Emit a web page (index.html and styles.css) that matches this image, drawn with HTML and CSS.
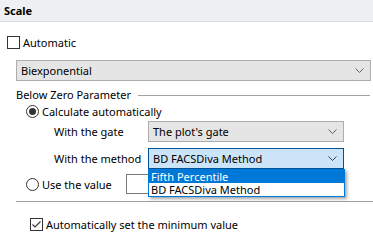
FILE: index.html
```html
<!DOCTYPE html>
<html lang="en">
<head>
    <meta charset="UTF-8">
    <title>Scale</title>
    <link rel="stylesheet" href="styles.css">
</head>
<body>
    <div class="header">Scale</div>
    <div class="content">
        <div class="check-row auto">
            <span class="checkbox"></span>
            <span>Automatic</span>
        </div>
        <div class="select scale-type">
            <span>Biexponential</span>
            <svg class="chevron" width="9" height="5" viewBox="0 0 9 5"><path d="M0.5 0.5 L4.5 4.5 L8.5 0.5" fill="none" stroke="#606060" stroke-width="1"/></svg>
        </div>
        <div class="group-title">
            <span>Below Zero Parameter</span>
            <span class="rule"></span>
        </div>
        <div class="radio-row">
            <span class="radio checked"></span>
            <span>Calculate automatically</span>
        </div>
        <div class="field-row gate">
            <span class="field-label">With the gate</span>
            <div class="select field-select">
                <span>The plot's gate</span>
                <svg class="chevron" width="9" height="5" viewBox="0 0 9 5"><path d="M0.5 0.5 L4.5 4.5 L8.5 0.5" fill="none" stroke="#606060" stroke-width="1"/></svg>
            </div>
        </div>
        <div class="field-row method">
            <span class="field-label">With the method</span>
            <div class="select field-select focused">
                <span>BD FACSDiva Method</span>
                <svg class="chevron" width="9" height="5" viewBox="0 0 9 5"><path d="M0.5 0.5 L4.5 4.5 L8.5 0.5" fill="none" stroke="#404040" stroke-width="1"/></svg>
                <ul class="dropdown">
                    <li class="selected">Fifth Percentile</li>
                    <li>BD FACSDiva Method</li>
                </ul>
            </div>
        </div>
        <div class="radio-row value-row">
            <span class="radio"></span>
            <span class="value-label">Use the value</span>
            <span class="value-input"></span>
        </div>
        <div class="separator"></div>
        <div class="check-row minimum">
            <span class="checkbox checked">
                <svg width="11" height="11" viewBox="0 0 11 11"><path d="M1.5 5.5 L4 8 L9.5 2.5" fill="none" stroke="#333" stroke-width="1.1"/></svg>
            </span>
            <span>Automatically set the minimum value</span>
        </div>
    </div>
</body>
</html>
```

FILE: styles.css
```css
body {
    margin: 0;
    padding: 0;
    font-family: 'Noto Sans', sans-serif;
    font-size: 11px;
    color: #000;
    background-color: #fff;
    width: 373px;
    height: 240px;
    overflow: hidden;
}

.header {
    height: 21px;
    line-height: 21px;
    padding-left: 4px;
    font-weight: bold;
    background-color: #eff0f4;
    border-bottom: 1px solid #dcdde3;
}

.content {
    padding-left: 7px;
}

.check-row,
.radio-row {
    display: flex;
    align-items: center;
    height: 13px;
    line-height: 13px;
    white-space: nowrap;
}

.checkbox {
    flex-shrink: 0;
    width: 11px;
    height: 11px;
    border: 1px solid #333;
    margin-right: 3px;
    display: flex;
    align-items: center;
    justify-content: center;
}

.auto {
    margin-top: 14px;
}

.select {
    position: relative;
    display: flex;
    align-items: center;
    justify-content: space-between;
    box-sizing: border-box;
    height: 21px;
    padding: 0 6px 0 4px;
    background-color: #e5e5e5;
    border: 1px solid #adadad;
    white-space: nowrap;
}

.scale-type {
    margin: 11px 2px 0 9px;
}

.group-title {
    display: flex;
    align-items: center;
    margin: 7px 3px 0 9px;
    height: 14px;
    line-height: 14px;
}

.rule {
    flex: 1;
    border-top: 1px solid #a0a0a0;
    margin-left: 7px;
}

.radio {
    flex-shrink: 0;
    box-sizing: border-box;
    width: 13px;
    height: 13px;
    border: 1px solid #333;
    border-radius: 50%;
    margin-right: 3px;
    display: flex;
    align-items: center;
    justify-content: center;
}

.radio.checked::after {
    content: "";
    width: 7px;
    height: 7px;
    border-radius: 50%;
    background-color: #333;
}

.radio-row {
    margin-left: 19px;
    margin-top: 3px;
}

.field-row {
    display: flex;
    align-items: center;
    margin-left: 47px;
    white-space: nowrap;
}

.gate {
    margin-top: 3px;
}

.method {
    margin-top: 6px;
}

.field-label {
    flex-shrink: 0;
    width: 94px;
}

.field-select {
    flex-shrink: 0;
    width: 196px;
}

.select.focused {
    background-color: #cce4f7;
    border-color: #005499;
}

.dropdown {
    position: absolute;
    top: 20px;
    left: -1px;
    width: 197px;
    box-sizing: border-box;
    margin: 0;
    padding: 0;
    list-style: none;
    background-color: #fff;
    border: 1px solid #0078d7;
    box-shadow: 2px 2px 3px rgba(0, 0, 0, 0.35);
    z-index: 2;
}

.dropdown li {
    height: 13px;
    line-height: 13px;
    padding-left: 2px;
}

.dropdown li.selected {
    background-color: #0078d7;
    color: #fff;
}

.value-row {
    margin-top: 5px;
    height: 20px;
}

.value-label {
    flex-shrink: 0;
    width: 84px;
}

.value-input {
    flex-shrink: 0;
    box-sizing: border-box;
    width: 60px;
    height: 20px;
    border: 1px solid #7a7a7a;
}

.separator {
    margin: 7px 0 0 9px;
    border-top: 1px solid #a0a0a0;
}

.minimum {
    margin: 16px 0 0 23px;
}
```
